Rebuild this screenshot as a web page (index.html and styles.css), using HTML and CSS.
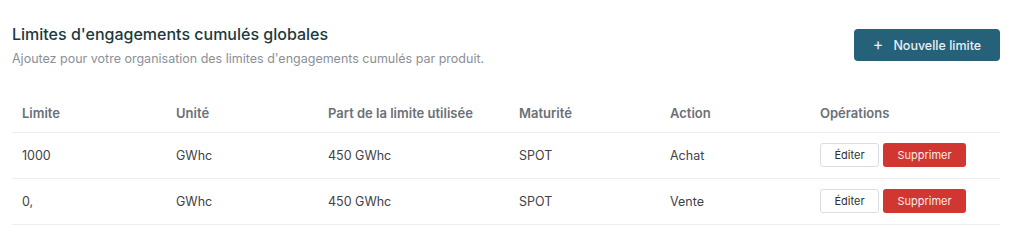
FILE: index.html
```html
<!DOCTYPE html>
<html lang="fr">
<head>
<meta charset="utf-8">
<link rel="stylesheet" href="styles.css">
</head>
<body>
<div class="page">
  <div class="header">
    <div class="titles">
      <h1 class="title">Limites d'engagements cumulés globales</h1>
      <p class="subtitle">Ajoutez pour votre organisation des limites d'engagements cumulés par produit.</p>
    </div>
    <button class="btn-primary"><span class="plus">+</span>Nouvelle limite</button>
  </div>
  <table class="table">
    <thead>
      <tr>
        <th class="c1">Limite</th>
        <th class="c2">Unité</th>
        <th class="c3">Part de la limite utilisée</th>
        <th class="c4">Maturité</th>
        <th class="c5">Action</th>
        <th class="c6">Opérations</th>
      </tr>
    </thead>
    <tbody>
      <tr>
        <td>1000</td>
        <td>GWhc</td>
        <td>450 GWhc</td>
        <td>SPOT</td>
        <td>Achat</td>
        <td><div class="ops"><button class="btn-edit">Éditer</button><button class="btn-del">Supprimer</button></div></td>
      </tr>
      <tr>
        <td>0,</td>
        <td>GWhc</td>
        <td>450 GWhc</td>
        <td>SPOT</td>
        <td>Vente</td>
        <td><div class="ops"><button class="btn-edit">Éditer</button><button class="btn-del">Supprimer</button></div></td>
      </tr>
    </tbody>
  </table>
</div>
</body>
</html>
```
FILE: styles.css
```css
* { box-sizing: border-box; }
html, body { margin: 0; padding: 0; background: #ffffff; }
body { font-family: Inter, "Noto Sans", sans-serif; color: #374151; }
.page { padding: 0 17px 0 12px; }
.header { display: flex; justify-content: space-between; align-items: flex-start; padding-top: 24px; }
.title { margin: 0; font-size: 16px; font-weight: 500; color: #1c3a3d; line-height: 20px; }
.subtitle { margin: 7px 0 0; font-size: 12.5px; color: #8b8f97; line-height: 16px; }
.btn-primary {
  margin-top: 5px; height: 32px; width: 146px; border: none; border-radius: 4px;
  background: #26617a; color: #e8f0f3; font-family: inherit; font-size: 12.5px; font-weight: 500;
  display: flex; align-items: center; justify-content: center; gap: 10px; padding: 0;
}
.plus { font-size: 16px; font-weight: 400; line-height: 1; margin-top: -2px; }
.table { width: 100%; border-collapse: collapse; margin-top: 27px; font-size: 12.5px; }
th { text-align: left; font-size: 13px; font-weight: 600; color: #6b7078; height: 38px; padding: 0 10px; border-bottom: 1px solid #eceef4; vertical-align: middle; }
td { height: 46px; padding: 0 10px; border-bottom: 1px solid #eceef4; color: #3f4246; vertical-align: middle; }
.c1 { width: 154px; } .c2 { width: 152px; } .c3 { width: 191px; } .c4 { width: 151px; } .c5 { width: 150px; }
.ops { display: flex; gap: 4px; }
.btn-edit {
  width: 59px; height: 24px; background: #fff; border: 1px solid #dcdde3; border-radius: 3px;
  font-family: inherit; font-size: 11px; color: #2f3237; padding: 0;
}
.btn-del {
  width: 83px; height: 24px; background: #d13730; border: none; border-radius: 3px;
  font-family: inherit; font-size: 11px; color: #fbeaea; padding: 0;
}
```
